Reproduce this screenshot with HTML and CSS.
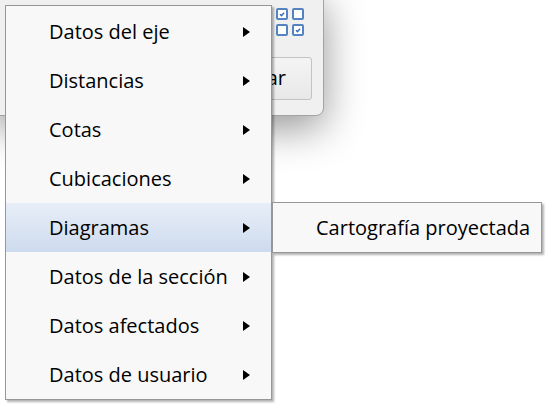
FILE: index.html
```html
<!DOCTYPE html>
<html lang="es">

<head>
    <meta charset="UTF-8">
    <meta name="viewport" content="width=device-width, initial-scale=1.0">
    <title>Menú contextual</title>
    <link rel="stylesheet" href="styles.css">
</head>

<body>
    <!-- ventana de fondo -->
    <div class="dialog">
        <div class="checks">
            <span class="chk on"><svg viewBox="0 0 10 10"><polyline points="2.5,5.2 4.3,7 7.6,3.4"/></svg></span>
            <span class="chk"></span>
            <span class="chk"></span>
            <span class="chk on"><svg viewBox="0 0 10 10"><polyline points="2.5,5.2 4.3,7 7.6,3.4"/></svg></span>
        </div>
        <a href="#" class="btn">Cancelar</a>
    </div>

    <!-- menú -->
    <ul class="menu">
        <li><span>Datos del eje</span><i class="arrow"></i></li>
        <li><span>Distancias</span><i class="arrow"></i></li>
        <li><span>Cotas</span><i class="arrow"></i></li>
        <li><span>Cubicaciones</span><i class="arrow"></i></li>
        <li class="active"><span>Diagramas</span><i class="arrow"></i></li>
        <li><span>Datos de la sección</span><i class="arrow"></i></li>
        <li><span>Datos afectados</span><i class="arrow"></i></li>
        <li><span>Datos de usuario</span><i class="arrow"></i></li>
    </ul>

    <!-- submenú -->
    <ul class="menu sub">
        <li><span>Cartografía proyectada</span></li>
    </ul>
</body>

</html>
```

FILE: styles.css
```css
/* reset */
* {
    margin: 0;
    box-sizing: border-box;
}

ul {
    list-style: none;
    padding: 0;
}

body {
    width: 550px;
    height: 407px;
    overflow: hidden;
    position: relative;
    background: #fff;
    font-family: "Open Sans", "Noto Sans", sans-serif;
    color: #000;
}

/* dialog */
.dialog {
    position: absolute;
    left: -10px;
    top: -10px;
    width: 334px;
    height: 126px;
    display: flex;
    flex-direction: column;
    align-items: flex-end;
    padding: 17px 11px 0 0;
    background: #f0f0f0;
    border: 1px solid #a3a3a3;
    border-radius: 8px;
    box-shadow: 0 12px 40px rgba(0, 0, 0, .42);
}

.checks {
    display: grid;
    grid-template-columns: 12px 12px;
    gap: 4px;
    margin-right: 8px;
}

.chk {
    width: 12px;
    height: 12px;
    border: 2px solid #5583c2;
    border-radius: 2px;
    background: #fff;
}

.chk svg {
    display: block;
    width: 8px;
    height: 8px;
    fill: none;
    stroke: #3d6fb5;
    stroke-width: 1.8;
}

.btn {
    margin-top: 21px;
    width: 130px;
    height: 43px;
    padding-right: 25px;
    text-align: right;
    line-height: 40px;
    font-size: 20px;
    color: #000;
    text-decoration: none;
    border: 1px solid #c3c3c3;
    border-radius: 3px;
    background: linear-gradient(#f4f4f4, #e8e8e8);
}

/* menu */
.menu {
    position: absolute;
    left: 5px;
    top: 5px;
    width: 267px;
    padding-top: 1px;
    background: #f8f8f8;
    border: 1px solid #979797;
    box-shadow: 2px 2px 2px rgba(0, 0, 0, .3);
}

.menu li {
    display: flex;
    align-items: center;
    justify-content: space-between;
    height: 49px;
    padding: 0 21px 0 43px;
    font-size: 20px;
    white-space: nowrap;
}

.menu li.active {
    background: linear-gradient(#e7eef8, #cedbee);
}

.arrow {
    width: 0;
    height: 0;
    border-left: 7px solid #000;
    border-top: 5px solid transparent;
    border-bottom: 5px solid transparent;
}

.sub {
    left: 272px;
    top: 202px;
    width: 270px;
    padding-top: 0;
}

.sub li {
    height: 49px;
    padding-right: 0;
}
```
